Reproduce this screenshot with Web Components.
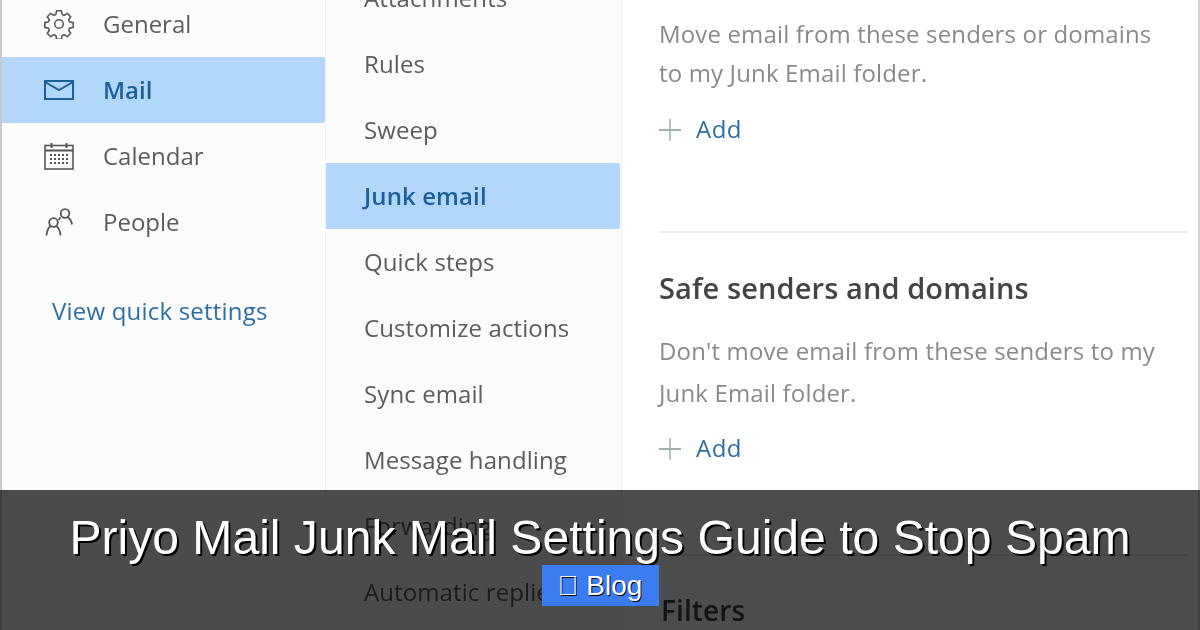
<!DOCTYPE html>
<html><head><meta charset="utf-8"><style>
html,body{margin:0;padding:0;background:#fff}
body{width:1200px;height:630px;overflow:hidden;position:relative}
</style></head><body>
<settings-shot></settings-shot>
<script>
const FONT = '"Open Sans","Noto Sans",sans-serif';
const icons = {
 gear:`<svg width="30" height="30" viewBox="0 0 30 30" fill="none" stroke="#5a5a5a" stroke-width="1.6" stroke-linejoin="round"><path d="M12.6 1.8h4.8l.7 3.6 2.2.9 3-2 3.400 3.400-2 3 .9 2.200 3.600.7v4.800l-3.600.7-.9 2.200 2 3-3.400 3.400-3-2-2.200.9-.7 3.600h-4.800l-.7-3.600-2.200-.9-3 2-3.400-3.400 2-3-.9-2.200-3.600-.7v-4.800l3.600-.7.9-2.200-2-3 3.400-3.400 3 2 2.200-.9z"/><circle cx="15" cy="15" r="4.300"/></svg>`,
 mail:`<svg width="30" height="22" viewBox="0 0 30 22" fill="none" stroke="#1f5f99" stroke-width="2"><rect x="1" y="2" width="28" height="18"/><path d="M1 3l14 8 14-8"/></svg>`,
 cal:`<svg width="30" height="28" viewBox="0 0 30 28" fill="none" stroke="#555" stroke-width="1.6"><rect x="1" y="3.500" width="28" height="23.500"/><path d="M1 8.500h28M7.500 1v5M22.500 1v5" stroke-width="2"/><path d="M6 13h18M6 17h18M6 21h18" stroke-width="2" stroke-dasharray="2 2"/></svg>`,
 people:`<svg width="30" height="30" viewBox="0 0 30 30" fill="none" stroke="#555" stroke-width="1.8"><circle cx="21" cy="6.500" r="4.300"/><circle cx="9.500" cy="15.500" r="4.300"/><path d="M2.500 28.500c.4-4.500 2-8 4-9.500M12.500 19c2 1.500 3.600 5 4 9.500M16.500 10.500c-.6 .6-1.200 1.400-1.700 2.500M24 10.500c2 1.200 3.500 3.500 4 7"/></svg>`,
 plus:`<svg width="22" height="22" viewBox="0 0 22 22" fill="none" stroke-width="1.600"><path d="M0 11h22" stroke="#8a9a9c"/><path d="M11 0v22" stroke="#9fb5b8"/></svg>`
};
function el(tag, css, html){
  customElements.define(tag, class extends HTMLElement{
    constructor(){super();this.attachShadow({mode:'open'}).innerHTML=`<style>${css}</style>${html}`;}
  });
}
el('nav-item',`
 :host{display:flex;align-items:center;height:66px;box-sizing:border-box;padding:0 0 2px var(--pad,42px);font:24px ${FONT};letter-spacing:var(--ls,0);color:#5c5c5c;white-space:nowrap}
 :host([active]){background:#b3d6fb;color:#1f5f99;font-weight:600;border-radius:0 2px 2px 0}
 .i{width:30px;display:flex;justify-content:center;margin-right:29px;padding-top:2px}
 :host([noicon]) .i{display:none}
`,`<span class="i"><slot name="icon"></slot></span><slot></slot>`);
el('add-link',`
 :host{display:flex;align-items:center;gap:15px;font:24px ${FONT};letter-spacing:.5px;color:#2f6ea5;height:34px}
 svg{display:block;margin-top:3px}
`,`${icons.plus}<slot></slot>`);
el('section-title',`
 :host{display:block;font:600 29px/40px ${FONT};letter-spacing:.1px;color:#444;white-space:nowrap}
`,`<slot></slot>`);
el('section-text',`
 :host{display:block;font:24px/39px ${FONT};letter-spacing:.15px;color:#8a8a8a;white-space:nowrap}
`,`<slot></slot>`);
el('banner-overlay',`
 :host{position:absolute;left:0;right:0;bottom:0;height:140px;background:rgba(0,0,0,.7);display:flex;flex-direction:column;align-items:center;font-family:"Liberation Sans",Arial,sans-serif;color:#fff}
 h1{margin:21px 0 0;font-size:48.1px;line-height:53px;font-weight:400;text-shadow:2px 2px 0 #000;white-space:nowrap}
 a{display:flex;align-items:center;justify-content:center;width:117px;height:41px;margin-top:1px;background:#3b7df0;font-size:28px;text-shadow:1px 1px 0 #000;white-space:pre}
`,`<h1><slot name="title"></slot></h1><a><slot name="tag"></slot></a>`);
el('settings-shot',`
 :host{display:flex;width:1200px;height:630px;overflow:hidden;background:#fff}
 .left{width:325px;flex:none;box-sizing:border-box;border-left:2px solid #c9c9c9;background:#fcfcfc;margin-top:-9px;filter:blur(.4px)}
 .mid{width:295px;flex:none;margin-top:-35px;background:#fbfbfb;border-left:1px solid #f0f0f0;box-sizing:border-box;--pad:38px;--ls:.1px;filter:blur(.4px)}
 .right{flex:1;margin-left:1px;border-left:1px solid #f0f0f0;border-right:2px solid #d4d4d4;padding:14px 10px 0 37px;min-width:0;filter:blur(.4px)}
 .quick{display:block;margin:36px 0 0 50px;font:24px/40px ${FONT};letter-spacing:.2px;color:#2f6ea5;white-space:nowrap}
 .rule{height:2px;background:#ececec}
`,`
 <div class="left">
  <nav-item>${icons.gear.replace('<svg','<svg slot="icon"')}General</nav-item>
  <nav-item active>${icons.mail.replace('<svg','<svg slot="icon"')}Mail</nav-item>
  <nav-item>${icons.cal.replace('<svg','<svg slot="icon"')}Calendar</nav-item>
  <nav-item>${icons.people.replace('<svg','<svg slot="icon"')}People</nav-item>
  <span class="quick">View quick settings</span>
 </div>
 <div class="mid">
  ${['Attachments','Rules','Sweep','Junk email','Quick steps','Customize actions','Sync email','Message handling','Forwarding','Automatic replies'].map(t=>`<nav-item noicon ${t==='Junk email'?'active':''}>${t}</nav-item>`).join('')}
 </div>
 <div class="right">
  <section-text>Move email from these senders or domains</section-text>
  <section-text>to my Junk Email folder.</section-text>
  <add-link style="margin-top:19px">Add</add-link>
  <div class="rule" style="margin-top:86px"></div>
  <section-title style="margin-top:35px">Safe senders and domains</section-title>
  <section-text style="margin-top:23px">Don't move email from these senders to my</section-text>
  <section-text style="margin-top:3px">Junk Email folder.</section-text>
  <add-link style="margin-top:18px">Add</add-link>
  <div class="rule" style="margin-top:90px"></div>
  <section-title style="margin-top:34px;padding-left:2px;font-size:28px">Filters</section-title>
 </div>
 <banner-overlay><span slot="title">Priyo Mail Junk Mail Settings Guide to Stop Spam</span><span slot="tag">&#xf07c; Blog</span></banner-overlay>
`);
</script>
</body></html>
